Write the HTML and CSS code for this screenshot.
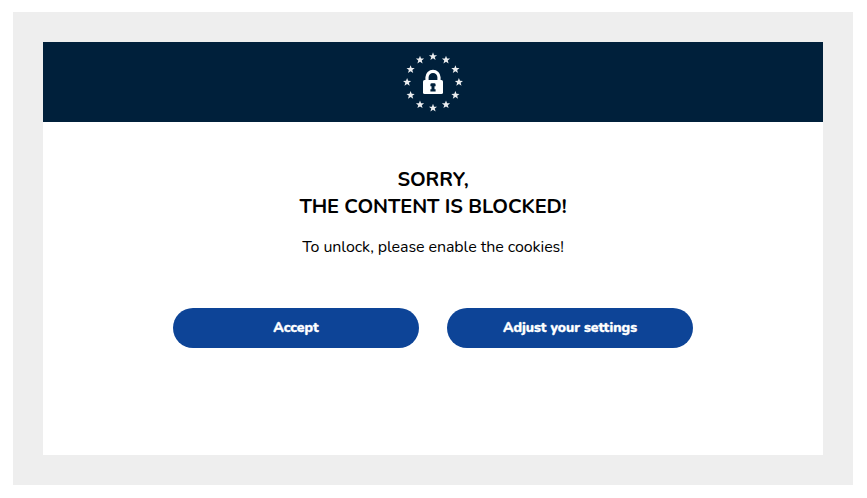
FILE: index.html
```html
<!DOCTYPE html>
<html lang="en">
<head>
<meta charset="utf-8">
<title>Content blocked</title>
<link rel="stylesheet" href="styles.css">
</head>
<body>
<main class="frame">
  <section class="notice">
    <header class="notice-header">
      <svg class="emblem" viewBox="-32 -32 64 64" fill="#fff" aria-hidden="true">
        <defs>
          <path id="star" d="M0-4.2 1.1-1.35 4.1-1.3 1.75.6 2.6 3.5 0 1.85-2.6 3.5-1.75.6-4.1-1.3-1.1-1.35Z"/>
        </defs>
        <g opacity=".92">
          <use href="#star" x="0" y="-25.5"/>
          <use href="#star" x="13" y="-22.1"/>
          <use href="#star" x="22.4" y="-12.6"/>
          <use href="#star" x="25.9" y="0.2"/>
          <use href="#star" x="22.4" y="13.2"/>
          <use href="#star" x="13" y="22.6"/>
          <use href="#star" x="0" y="26"/>
          <use href="#star" x="-13" y="22.6"/>
          <use href="#star" x="-22.4" y="13.2"/>
          <use href="#star" x="-25.9" y="0.2"/>
          <use href="#star" x="-22.4" y="-12.6"/>
          <use href="#star" x="-13" y="-22.1"/>
        </g>
        <path d="M-6-1V-4.7A6 6 0 0 1 6-4.7V-1" fill="none" stroke="#fff" stroke-width="3.2"/>
        <rect x="-10" y="-2" width="20" height="14" rx="1.6"/>
        <path d="M-2.6 2.6Q-2.6 1.2-1.2 1.2H1.2Q2.6 1.2 2.6 2.6V4.3H1.5V7.3H2.6V9.4H-2.6V7.3H-1.5V4.3H-2.6Z" fill="#00203b"/>
      </svg>
    </header>
    <div class="notice-body">
      <h1 class="title"><span>SORRY,</span><span>THE CONTENT IS BLOCKED!</span></h1>
      <p class="message">To unlock, please enable the cookies!</p>
      <div class="actions">
        <button class="button" type="button">Accept</button>
        <button class="button" type="button">Adjust your settings</button>
      </div>
    </div>
  </section>
</main>
</body>
</html>
```
FILE: styles.css
```css
* { box-sizing: border-box; }

body {
  margin: 0;
  background: #fff;
  color: #000;
  font-family: Nunito, Lato, sans-serif;
}

.frame {
  width: 840px;
  height: 473px;
  margin: 12px 0 0 13px;
  padding: 30px;
  background: #eee;
}

.notice {
  height: 413px;
  background: #fff;
}

.notice-header {
  display: flex;
  align-items: center;
  justify-content: center;
  height: 80px;
  background: #00203b;
}

.emblem {
  width: 64px;
  height: 64px;
}

.notice-body {
  display: flex;
  flex-direction: column;
  align-items: center;
  padding-top: 44px;
  text-align: center;
}

.title {
  display: flex;
  flex-direction: column;
  align-items: center;
  margin: 0;
  font-size: 20px;
  font-weight: 700;
  line-height: 27px;
  letter-spacing: -0.07px;
  white-space: nowrap;
}

.message {
  margin: 16px 0 0;
  font-size: 16px;
  line-height: 22px;
  letter-spacing: -0.08px;
}

.actions {
  display: flex;
  gap: 28px;
  margin-top: 50px;
}

.button {
  width: 246px;
  height: 40px;
  padding: 0;
  border: 0;
  border-radius: 20px;
  background: #0d4497;
  color: #fff;
  font: 800 14px/40px Nunito, Lato, sans-serif;
  -webkit-text-stroke: 0.35px #fff;
}
```
